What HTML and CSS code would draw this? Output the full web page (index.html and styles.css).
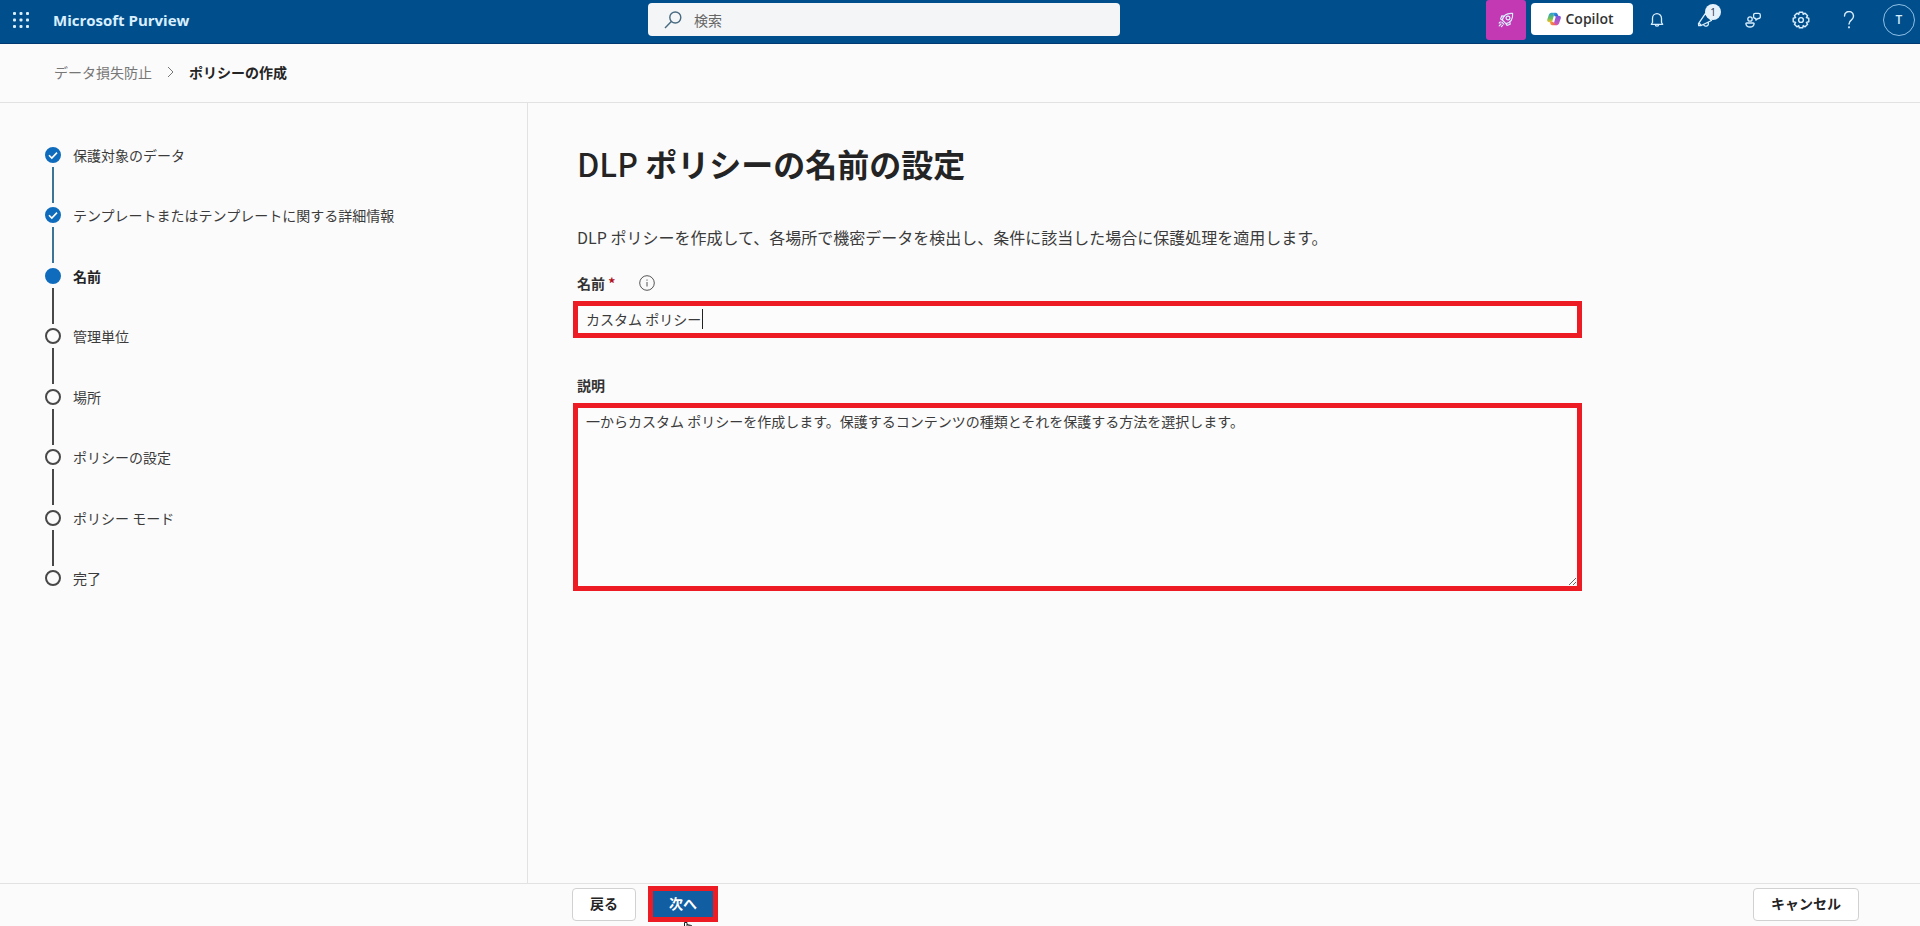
FILE: index.html
```html
<!DOCTYPE html>
<html lang="ja">
<head>
<meta charset="utf-8">
<title>ポリシーの作成 - Microsoft Purview</title>
<link rel="stylesheet" href="styles.css">
</head>
<body>
<header class="topbar">
  <div class="topbar-start">
    <button class="icon-button launcher" type="button" aria-label="アプリ起動ツール">
      <svg width="16" height="16" viewBox="0 0 16 16" fill="currentColor"><rect width="3" height="3" rx="1"/><rect x="6.5" width="3" height="3" rx="1"/><rect x="13" width="3" height="3" rx="1"/><rect y="6.5" width="3" height="3" rx="1"/><rect x="6.5" y="6.5" width="3" height="3" rx="1"/><rect x="13" y="6.5" width="3" height="3" rx="1"/><rect y="13" width="3" height="3" rx="1"/><rect x="6.5" y="13" width="3" height="3" rx="1"/><rect x="13" y="13" width="3" height="3" rx="1"/></svg>
    </button>
    <a class="brand" href="#">Microsoft Purview</a>
  </div>
  <form class="search" role="search">
    <svg width="18" height="18" viewBox="0 0 18 18" fill="none" stroke="currentColor" stroke-width="1.4"><circle cx="11.3" cy="6.5" r="5.5"/><path d="M7.3 10.4 1 17"/></svg>
    <input class="search-input" type="search" placeholder="検索" aria-label="検索">
  </form>
  <div class="topbar-end">
    <button class="rocket" type="button" aria-label="新機能">
      <svg width="16" height="16" viewBox="0 0 16 16" fill="none" stroke="currentColor" stroke-width="1.2" stroke-linecap="round" stroke-linejoin="round"><path d="M4.300 8C5.300 3.800 8.800.9 14.600 1.400 15.100 7.200 12.200 10.700 8 11.700L4.300 8Z"/><circle cx="10" cy="6" r="1.900"/><path d="M6 4.200 3.800 3.800 2.600 7 4.300 8M11.800 10l.4 2.200L9 13.400 8 11.700M3.800 10.200l2 2M3 12l-1.800 1.800M4.600 13.300 3.400 14.600M2.300 10 1.200 11"/></svg>
    </button>
    <button class="copilot" type="button">
      <svg width="14" height="14" viewBox="0 0 14 14"><defs><linearGradient id="blue" x1="0" y1="0" x2="1" y2="1"><stop stop-color="#39b5e8"/><stop offset="1" stop-color="#1c50c8"/></linearGradient><linearGradient id="green" x1="0" y1="0" x2="0" y2="1"><stop stop-color="#2a9fd0"/><stop offset=".6" stop-color="#6fbf5a"/><stop offset="1" stop-color="#f4c52f"/></linearGradient><linearGradient id="violet" x1="0" y1="0" x2="0" y2="1"><stop stop-color="#7a55dd"/><stop offset="1" stop-color="#d958b4"/></linearGradient><linearGradient id="orange" x1="0" y1="0" x2="1" y2="0"><stop stop-color="#f6a13a"/><stop offset="1" stop-color="#e8476f"/></linearGradient></defs><path fill="url(#blue)" d="M4.500.8h4.300c1.300 0 1.800 1 2.200 2.700L11.300 4.600H9.200C7.900 4.600 7.300 4 7 3L6.600 1.900Z"/><path fill="url(#green)" d="M4.500.8C3 .8 2.200 1.700 1.600 3.500L.3 7.400C-.2 9 .5 10.200 2.200 10.200h1.300c1.100 0 1.600-.6 2-1.800L7 3C6.700 1.700 5.800.8 4.500.8Z"/><path fill="url(#violet)" d="M9.500 13.200c1.500 0 2.300-.9 2.900-2.700l1.300-3.900c.5-1.600-.2-2.800-1.900-2.800h-1.300c-1.100 0-1.600.6-2 1.800L7 11c.3 1.300 1.200 2.200 2.500 2.200Z"/><path fill="url(#orange)" d="M9.500 13.200H5.200c-1.300 0-1.800-1-2.200-2.700l-.1-.7h1.900c1.300 0 1.900.3 2.200 1.200Z"/></svg>
      <span>Copilot</span>
    </button>
    <button class="icon-button" type="button" aria-label="通知">
      <svg width="16" height="16" viewBox="0 0 16 16" fill="none" stroke="currentColor" stroke-width="1.3" stroke-linejoin="round"><path d="M3.500 10.500V6.200a4.500 4.500 0 0 1 9 0v4.300l1.200 1.800H2.300l1.200-1.800Z"/><path d="M6.300 12.500a1.700 1.700 0 0 0 3.400 0"/></svg>
    </button>
    <button class="icon-button" type="button" aria-label="お知らせ 1 件">
      <svg width="16" height="16" viewBox="0 0 16 16" fill="none" stroke="currentColor" stroke-width="1.300" stroke-linejoin="round"><path d="M8.500 1.300 14.500 8.500 4.200 13.500 1.700 13.700 1.500 11.700 8.500 1.300ZM6.500 12.400a2.500 2.500 0 1 0 4.400-2.200M2 11l2.400 2.500"/></svg>
      <span class="badge">1</span>
    </button>
    <button class="icon-button" type="button" aria-label="フィードバック">
      <svg width="16" height="16" viewBox="0 0 16 16" fill="none" stroke="currentColor" stroke-width="1.300" stroke-linejoin="round"><circle cx="5" cy="7" r="2.200"/><path d="M1.700 11h6.600c.5 0 .9.4.8.9-.3 2-1.800 3.100-4.100 3.100S1.200 13.900.900 11.900c-.1-.5.300-.9.800-.9ZM10.300 1.300h3.300c1 0 1.700.7 1.700 1.700v1.800c0 1-.7 1.700-1.700 1.700h-.6l-2.200 1.600V6.500C9.600 6.500 8.600 5.800 8.600 4.800V3c0-1 .7-1.700 1.700-1.700Z"/></svg>
    </button>
    <button class="icon-button" type="button" aria-label="設定">
      <svg width="18" height="18" viewBox="0 0 18 18" fill="none" stroke="currentColor" stroke-width="1.400" stroke-linejoin="round"><path d="M7.300 1.200h3.400l.5 2.200 1.900-1.200 2.500 2.500-1.200 1.900 2.400.6v3.600l-2.400.6 1.200 1.900-2.500 2.500-1.900-1.200-.5 2.200H7.300l-.5-2.200-1.900 1.200-2.500-2.500 1.200-1.900-2.400-.6V7.200l2.400-.6-1.200-1.900 2.500-2.500 1.900 1.200.5-2.200Z"/><circle cx="9" cy="9" r="2.400"/></svg>
    </button>
    <button class="icon-button" type="button" aria-label="ヘルプ">
      <svg width="12" height="18" viewBox="0 0 12 18" fill="none" stroke="currentColor" stroke-width="1.400" stroke-linecap="round"><path d="M1.500 5a4.500 4.500 0 1 1 7.200 3.600C7 9.900 6 10.800 6 13"/><circle cx="6" cy="16.300" r=".4"/></svg>
    </button>
    <button class="avatar" type="button" aria-label="アカウント">T</button>
  </div>
</header>

<nav class="breadcrumb" aria-label="階層リンク">
  <a class="breadcrumb-link" href="#">データ損失防止</a>
  <svg width="7" height="12" viewBox="0 0 7 12" fill="none" stroke="currentColor"><path d="M1 1l5 5-5 5"/></svg>
  <span class="breadcrumb-current" aria-current="page">ポリシーの作成</span>
</nav>

<div class="workspace">
  <aside class="sidebar">
    <ol class="steps">
      <li class="step done"><span class="marker"><svg width="16" height="16" viewBox="0 0 16 16" fill="none" stroke="currentColor" stroke-width="1.600"><path d="M4 8.200 6.800 11 12 5.600"/></svg></span><span class="step-label">保護対象のデータ</span></li>
      <li class="step done"><span class="marker"><svg width="16" height="16" viewBox="0 0 16 16" fill="none" stroke="currentColor" stroke-width="1.600"><path d="M4 8.200 6.800 11 12 5.600"/></svg></span><span class="step-label">テンプレートまたはテンプレートに関する詳細情報</span></li>
      <li class="step current" aria-current="step"><span class="marker"></span><span class="step-label">名前</span></li>
      <li class="step"><span class="marker"></span><span class="step-label">管理単位</span></li>
      <li class="step"><span class="marker"></span><span class="step-label">場所</span></li>
      <li class="step"><span class="marker"></span><span class="step-label">ポリシーの設定</span></li>
      <li class="step"><span class="marker"></span><span class="step-label">ポリシー モード</span></li>
      <li class="step"><span class="marker"></span><span class="step-label">完了</span></li>
    </ol>
  </aside>

  <main class="content">
    <h1 class="title"><span class="title-latin">DLP</span> ポリシーの名前の設定</h1>
    <p class="lead">DLP ポリシーを作成して、各場所で機密データを検出し、条件に該当した場合に保護処理を適用します。</p>
    <form class="fields" id="policy">
      <div class="field">
        <div class="label-row">
          <label class="label" for="name">名前 <span class="required">*</span></label>
          <button class="info" type="button" aria-label="名前の情報">
            <svg width="16" height="16" viewBox="0 0 16 16" fill="none" stroke="currentColor"><circle cx="8" cy="8" r="7.300"/><path d="M8 7v4.500M8 4.500v1.200"/></svg>
          </button>
        </div>
        <div class="highlight name-box">
          <input class="name-input" id="name" type="text" value="カスタム ポリシー" required>
          <span class="caret"></span>
        </div>
      </div>
      <div class="field">
        <label class="label" for="description">説明</label>
        <textarea class="highlight description" id="description" rows="8">一からカスタム ポリシーを作成します。保護するコンテンツの種類とそれを保護する方法を選択します。</textarea>
      </div>
    </form>
  </main>
</div>

<footer class="footer">
  <div class="footer-main">
    <button class="button" type="button">戻る</button>
    <button class="button next" type="submit" form="policy">次へ</button>
  </div>
  <button class="button cancel" type="button">キャンセル</button>
</footer>
<svg class="pointer" width="12" height="4" viewBox="0 0 12 4" fill="#fff" stroke="#222" aria-hidden="true"><path d="M2.500 5V.500h2.500V5M5 2.500l2 .5V5M7 3l2.500.5V5"/></svg>
</body>
</html>
```

FILE: styles.css
```css
* {
  box-sizing: border-box;
}

body {
  display: flex;
  flex-direction: column;
  min-height: 100vh;
  margin: 0;
  background: #fbfbfb;
  color: #3b3b3b;
  font: 14px/20px "Noto Sans CJK JP", sans-serif;
}

button,
input,
textarea {
  color: inherit;
  font: inherit;
}

button {
  padding: 0;
  border: 0;
  background: none;
}

svg {
  display: block;
}

a {
  color: inherit;
  text-decoration: none;
}

.topbar {
  display: grid;
  grid-template-columns: 648px minmax(200px, 472px) 1fr;
  align-items: start;
  height: 44px;
  border-bottom: 1px solid #003a72;
  background: #004e8c;
  color: #d9efff;
}

.topbar-start {
  display: flex;
  align-items: center;
  gap: 12px;
  height: 40px;
}

.icon-button {
  display: flex;
  position: relative;
  align-items: center;
  justify-content: center;
  width: 48px;
  height: 40px;
}

.launcher {
  width: 41px;
}

.brand {
  font: 700 15px/24px "Open Sans", sans-serif;
}

.search {
  display: flex;
  align-items: center;
  gap: 12px;
  height: 33px;
  margin-top: 3px;
  padding: 0 16px;
  border-radius: 4px;
  background: #f4f5f7;
  color: #486a80;
}

.search-input {
  flex: 1;
  padding: 0;
  border: 0;
  outline: 0;
  background: none;
}

.search-input::placeholder {
  color: #666;
}

.topbar-end {
  display: flex;
  justify-content: flex-end;
  padding-right: 5px;
}

.rocket {
  display: flex;
  align-items: center;
  justify-content: center;
  width: 40px;
  height: 40px;
  margin-right: 5px;
  border-radius: 3px;
  background: #c239b3;
}

.copilot {
  display: flex;
  align-items: center;
  justify-content: center;
  gap: 4px;
  width: 102px;
  height: 32px;
  margin-top: 3px;
  padding-right: 3px;
  border-radius: 4px;
  background: #fff;
  color: #333;
  font: 600 14px/20px "Open Sans", sans-serif;
}

.badge {
  position: absolute;
  top: 4px;
  right: 8px;
  width: 16px;
  border-radius: 8px;
  background: #e6f2fb;
  color: #234;
  font: 10px/16px "Open Sans", sans-serif;
  text-align: center;
}

.avatar {
  width: 32px;
  height: 32px;
  margin: 4px 0 0 10px;
  border: 1px solid #8fc0e6;
  border-radius: 50%;
  font: 600 12px/30px "Open Sans", sans-serif;
}

.breadcrumb {
  display: flex;
  align-items: center;
  gap: 15px;
  height: 59px;
  padding: 0 54px 3px;
  border-bottom: 1px solid #e2e2e2;
}

.breadcrumb-link,
.breadcrumb svg {
  color: #777;
}

.breadcrumb-current {
  color: #242424;
  font-weight: 700;
}

.workspace {
  display: flex;
  flex: 1;
}

.sidebar {
  width: 528px;
  padding: 42px 32px 42px 45px;
  border-right: 1px solid #e2e2e2;
}

.steps {
  display: flex;
  flex-direction: column;
  min-height: 443px;
  margin: 0;
  padding: 0;
  list-style: none;
}

.step {
  display: flex;
  flex: 1;
  gap: 12px;
}

.step:last-child {
  flex: none;
}

.step:not(:last-child) .marker::after {
  position: absolute;
  top: 18px;
  left: 5px;
  width: 2px;
  height: 36px;
  background: #484848;
  content: "";
}

.marker {
  position: relative;
  width: 16px;
  height: 16px;
  margin-top: 2px;
  border: 2px solid #484848;
  border-radius: 50%;
}

.marker svg {
  margin: -2px;
}

.done .marker,
.current .marker {
  border-color: #0f6cbd;
  background: #0f6cbd;
  color: #fff;
}

.done:not(:last-child) .marker::after {
  background: #3d7396;
}

.current .step-label {
  color: #242424;
  font-weight: 700;
}

.content {
  flex: 1;
  padding: 38px 45px;
}

.title {
  margin: 0 4px;
  color: #242424;
  font-size: 32px;
  font-weight: 700;
  line-height: 44px;
}

.title-latin {
  font-weight: 500;
}

.lead {
  margin: 40px 4px 24px;
  font-size: 16px;
  line-height: 24px;
}

.fields {
  display: flex;
  flex-direction: column;
  gap: 37px;
  max-width: 1009px;
}

.field {
  display: flex;
  flex-direction: column;
  gap: 8px;
}

.label-row {
  display: flex;
  align-items: center;
  gap: 24px;
}

.label {
  margin-left: 4px;
  color: #333;
  font-weight: 700;
}

.required {
  color: #b10e1c;
}

.info {
  color: #555;
}

.highlight {
  border: 5px solid #ed1c24;
  border-radius: 0;
  background: #fcfcfc;
}

.name-box {
  display: flex;
  align-items: center;
  height: 37px;
  padding: 0 8px 1px;
}

.name-input {
  width: 116px;
  padding: 0;
  border: 0;
  outline: 0;
  background: none;
}

.caret {
  width: 1px;
  height: 20px;
  background: #222;
}

.description {
  display: block;
  width: 100%;
  height: 188px;
  padding: 3px 8px;
  outline: 0;
  resize: vertical;
}

.footer {
  display: flex;
  align-items: center;
  justify-content: space-between;
  height: 43px;
  padding: 0 61px 2px 572px;
  border-top: 1px solid #e2e2e2;
}

.footer-main {
  display: flex;
  align-items: center;
  gap: 12px;
}

.button {
  height: 33px;
  padding: 0 17px 2px;
  border: 1px solid #d1d1d1;
  border-radius: 4px;
  background: #fff;
  color: #242424;
  font-weight: 700;
}

.next {
  height: 36px;
  border: 5px solid #ed1c24;
  border-radius: 0;
  background: #115ea3;
  color: #fff;
}

.next {
  padding: 0 16px 2px;
}

.pointer {
  position: absolute;
  bottom: 0;
  left: 682px;
}
```
